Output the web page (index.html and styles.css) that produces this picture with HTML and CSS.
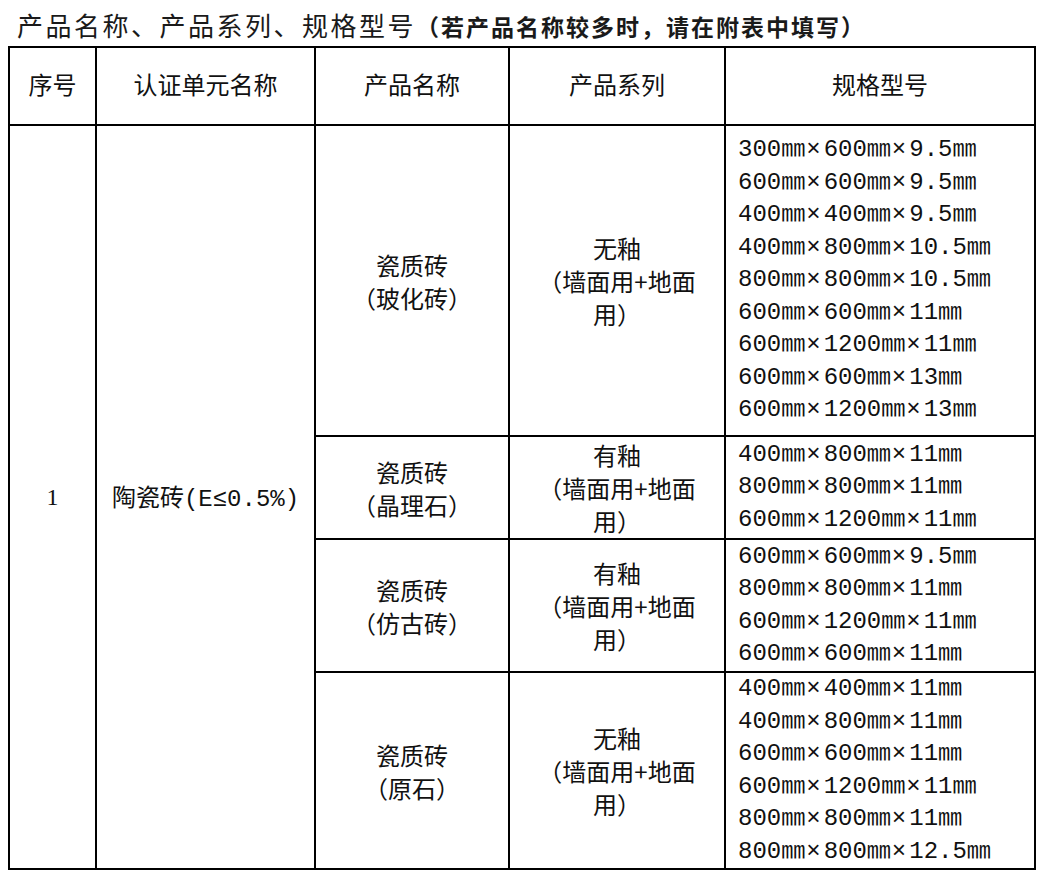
FILE: index.html
```html
<!DOCTYPE html>
<html lang="zh-CN">
<head>
<meta charset="utf-8">
<title>产品名称、产品系列、规格型号</title>
<link rel="stylesheet" href="styles.css">
</head>
<body>
<p class="title">产品名称、产品系列、规格型号<span class="note">（若产品名称较多时，请在附表中填写）</span></p>
<table class="grid">
  <colgroup>
    <col class="c1"><col class="c2"><col class="c3"><col class="c4"><col class="c5">
  </colgroup>
  <thead>
    <tr class="head">
      <th>序号</th>
      <th>认证单元名称</th>
      <th>产品名称</th>
      <th>产品系列</th>
      <th>规格型号</th>
    </tr>
  </thead>
  <tbody>
    <tr class="r1">
      <td rowspan="4" class="num">1</td>
      <td rowspan="4" class="unit">陶瓷砖<span class="lat">(E≤0.5%)</span></td>
      <td class="name">瓷质砖<br>（玻化砖）</td>
      <td class="series">无釉<br>（墙面用+地面<br>用）</td>
      <td class="spec">300㎜<i>×</i>600㎜<i>×</i>9.5㎜<br>600㎜<i>×</i>600㎜<i>×</i>9.5㎜<br>400㎜<i>×</i>400㎜<i>×</i>9.5㎜<br>400㎜<i>×</i>800㎜<i>×</i>10.5㎜<br>800㎜<i>×</i>800㎜<i>×</i>10.5㎜<br>600㎜<i>×</i>600㎜<i>×</i>11㎜<br>600㎜<i>×</i>1200㎜<i>×</i>11㎜<br>600㎜<i>×</i>600㎜<i>×</i>13㎜<br>600㎜<i>×</i>1200㎜<i>×</i>13㎜</td>
    </tr>
    <tr class="r2">
      <td class="name">瓷质砖<br>（晶理石）</td>
      <td class="series">有釉<br>（墙面用+地面<br>用）</td>
      <td class="spec">400㎜<i>×</i>800㎜<i>×</i>11㎜<br>800㎜<i>×</i>800㎜<i>×</i>11㎜<br>600㎜<i>×</i>1200㎜<i>×</i>11㎜</td>
    </tr>
    <tr class="r3">
      <td class="name">瓷质砖<br>（仿古砖）</td>
      <td class="series">有釉<br>（墙面用+地面<br>用）</td>
      <td class="spec">600㎜<i>×</i>600㎜<i>×</i>9.5㎜<br>800㎜<i>×</i>800㎜<i>×</i>11㎜<br>600㎜<i>×</i>1200㎜<i>×</i>11㎜<br>600㎜<i>×</i>600㎜<i>×</i>11㎜</td>
    </tr>
    <tr class="r4">
      <td class="name">瓷质砖<br>（原石）</td>
      <td class="series">无釉<br>（墙面用+地面<br>用）</td>
      <td class="spec">400㎜<i>×</i>400㎜<i>×</i>11㎜<br>400㎜<i>×</i>800㎜<i>×</i>11㎜<br>600㎜<i>×</i>600㎜<i>×</i>11㎜<br>600㎜<i>×</i>1200㎜<i>×</i>11㎜<br>800㎜<i>×</i>800㎜<i>×</i>11㎜<br>800㎜<i>×</i>800㎜<i>×</i>12.5㎜</td>
    </tr>
  </tbody>
</table>
</body>
</html>
```
FILE: styles.css
```css
html, body {
  margin: 0;
  padding: 0;
  background: #ffffff;
}

body {
  font-family: "Noto Sans CJK SC", "Noto Sans", sans-serif;
  color: #111111;
}

.title {
  margin: 0;
  padding: 7px 0 0 17px;
  height: 46px;
  box-sizing: border-box;
  font-size: 26px;
  line-height: 36px;
  letter-spacing: 2.5px;
  white-space: nowrap;
  color: #1a1a1a;
}

.title .note {
  font-size: 23px;
  letter-spacing: 2px;
  font-weight: 700;
}

.grid {
  margin-left: 8px;
  width: 1026px;
  border-collapse: collapse;
  table-layout: fixed;
  font-size: 24px;
  line-height: 33px;
}

.c1 { width: 87px; }
.c2 { width: 219px; }
.c3 { width: 194px; }
.c4 { width: 216px; }
.c5 { width: 310px; }

.grid th,
.grid td {
  border: 2px solid #000000;
  padding: 0;
  text-align: center;
  vertical-align: middle;
}

.grid th {
  font-weight: 400;
  padding-bottom: 6px;
}

.head { height: 78px; }
.r1 { height: 311px; }
.r2 { height: 103px; }
.r3 { height: 133px; }
.r4 { height: 196px; }

.num {
  font-family: "Liberation Serif", serif;
  font-size: 24px;
}

.unit .lat {
  font-family: "Liberation Mono", "Noto Sans CJK SC", monospace;
  font-size: 24px;
}

.spec {
  text-align: left !important;
  padding-left: 12px !important;
  font-family: "Liberation Mono", "Noto Sans CJK SC", monospace;
  font-size: 24px;
  line-height: 32.5px;
  white-space: nowrap;
}

.spec i {
  font-style: normal;
  margin: 0 3px 0 1px;
}
```
